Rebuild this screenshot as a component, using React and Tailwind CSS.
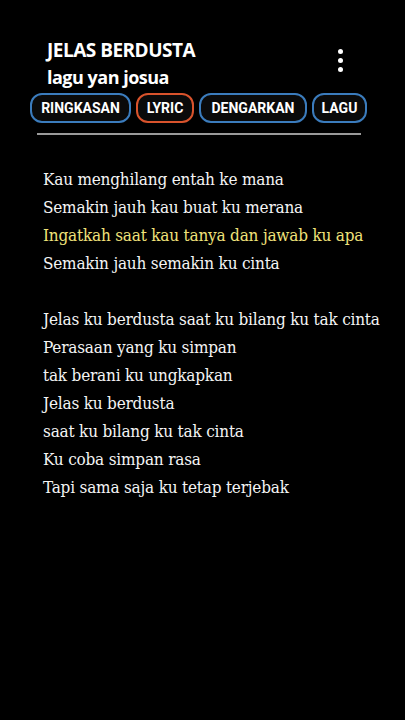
import React from 'react';

const tabs = [
  { label: 'RINGKASAN', active: false, w: 'w-[101px]' },
  { label: 'LYRIC', active: true, w: 'w-[58px]' },
  { label: 'DENGARKAN', active: false, w: 'w-[108px]' },
  { label: 'LAGU', active: false, w: 'w-[55px]' },
];

const verse1 = [
  { text: 'Kau menghilang entah ke mana' },
  { text: 'Semakin jauh kau buat ku merana' },
  { text: 'Ingatkah saat kau tanya dan jawab ku apa', hl: true },
  { text: 'Semakin jauh semakin ku cinta' },
];

const verse2 = [
  'Jelas ku berdusta saat ku bilang ku tak cinta',
  'Perasaan yang ku simpan',
  'tak berani ku ungkapkan',
  'Jelas ku berdusta',
  'saat ku bilang ku tak cinta',
  'Ku coba simpan rasa',
  'Tapi sama saja ku tetap terjebak',
];

const LyricsScreen = () => {
  return (
    <div className="w-[405px] h-[720px] bg-black overflow-hidden">
      {/* header */}
      <div className="flex justify-between pt-[39px] pl-[47px] pr-[62px]">
        <div className="font-['Open_Sans',sans-serif] font-bold text-white">
          <div className="text-[19px] leading-[23px] tracking-[-0.5px]">JELAS BERDUSTA</div>
          <div className="text-[18px] leading-[24px] tracking-[-0.5px] mt-[3px]">lagu yan josua</div>
        </div>
        <div className="flex flex-col gap-[4px] pt-[10px]">
          <span className="w-[5px] h-[5px] rounded-full bg-white" />
          <span className="w-[5px] h-[5px] rounded-full bg-white" />
          <span className="w-[5px] h-[5px] rounded-full bg-white" />
        </div>
      </div>

      {/* tabs */}
      <div className="flex gap-[5px] pl-[30px] mt-[4px]">
        {tabs.map((t) => (
          <div
            key={t.label}
            className={`${t.w} h-[30px] rounded-[12px] border-2 flex items-center justify-center bg-[#0a0a0a] font-['Roboto',sans-serif] font-bold text-[14px] text-white ${
              t.active ? 'border-[#d9532c]' : 'border-[#3b7cbd]'
            }`}
          >
            {t.label}
          </div>
        ))}
      </div>
      <div className="ml-[37px] w-[324px] h-[2px] bg-[#9a9a9a] mt-[10px]" />

      {/* lyrics */}
      <div className="pl-[43px] mt-[30px] font-['DejaVu_Serif_Condensed',serif] text-[17px] tracking-[-0.2px] leading-[28px] text-[#f4f4f4]">
        {verse1.map((l) => (
          <div key={l.text} className={l.hl ? 'text-[#f0e27a]' : ''}>{l.text}</div>
        ))}
        <div className="h-[28px]" />
        {verse2.map((l) => (
          <div key={l}>{l}</div>
        ))}
      </div>
    </div>
  );
};

export default LyricsScreen;
